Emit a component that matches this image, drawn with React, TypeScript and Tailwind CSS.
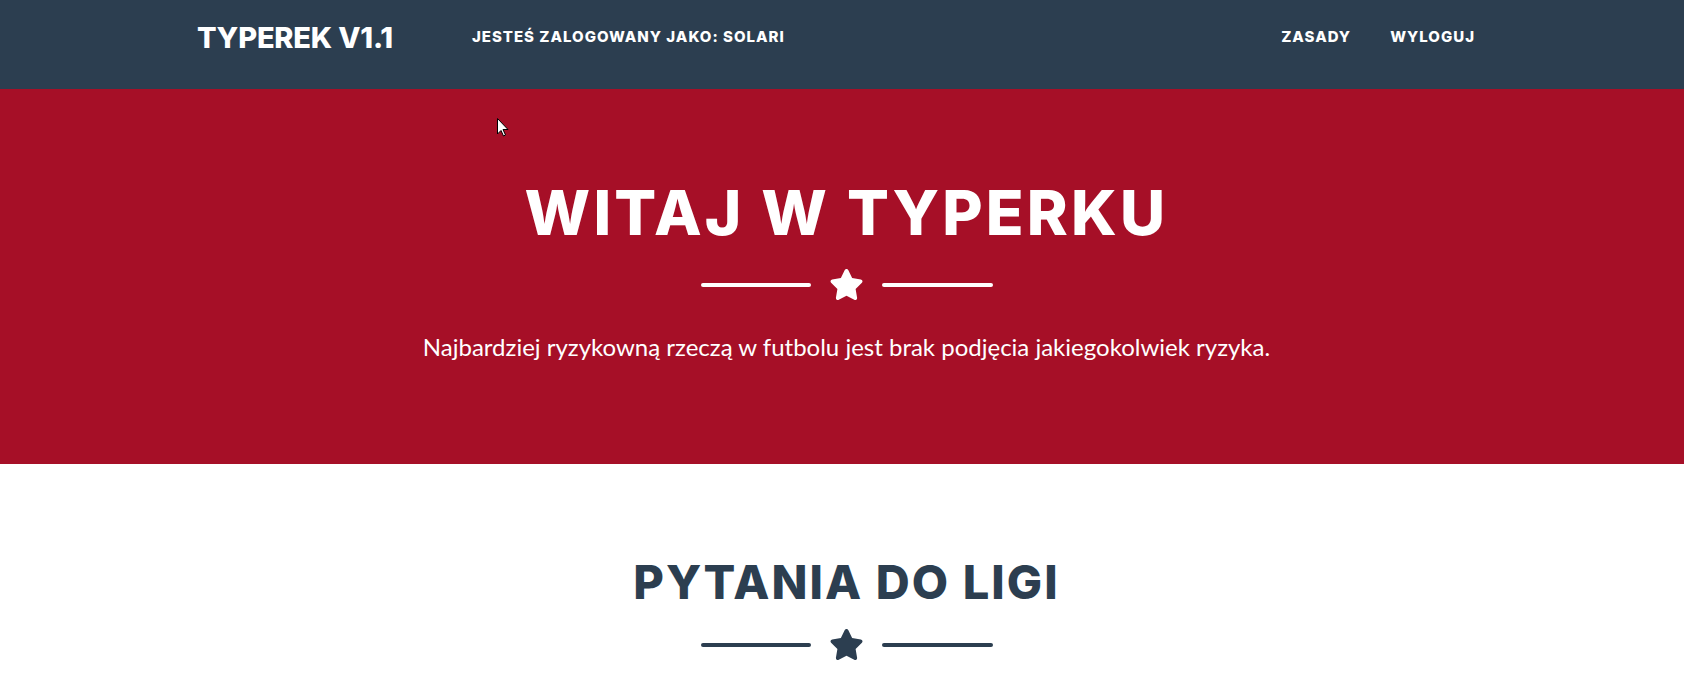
import React from "react";

const Star = ({ className }: { className: string }) => (
  <svg viewBox="0 0 576 512" className={className} fill="currentColor">
    <path d="M316.9 18C311.6 7 300.4 0 288.1 0s-23.4 7-28.8 18L195 150.3 51.4 171.5c-12 1.8-22 10.2-25.7 21.7s-.7 24.2 7.9 32.7L137.8 329 113.2 474.7c-2 12 3 24.2 12.9 31.3s23 8 33.8 2.3l128.3-68.5 128.3 68.5c10.8 5.7 23.9 4.9 33.8-2.3s14.9-19.3 12.9-31.3L438.5 329 542.7 225.9c8.6-8.5 11.7-21.2 7.9-32.7s-13.7-19.9-25.7-21.7L381.2 150.3 316.9 18z" />
  </svg>
);

const Divider = ({ light }: { light?: boolean }) => {
  const line = light ? "bg-white" : "bg-[#2c3e50]";
  return (
    <div className={`flex items-center ${light ? "text-white" : "text-[#2c3e50]"}`}>
      <div className={`w-[110px] h-[4px] rounded-full ${line}`} />
      <Star className="w-[35px] h-[31px] mx-[18px]" />
      <div className={`w-[111px] h-[4px] rounded-full ${line}`} />
    </div>
  );
};

export default function App() {
  const heading = { fontFamily: "Inter, 'DejaVu Sans', sans-serif" };

  return (
    <div className="min-h-screen bg-white relative">
      <nav className="h-[89px] bg-[#2c3e50] text-white" style={heading}>
        <div className="w-[1320px] mx-auto px-3 flex items-start">
          <a className="mt-[20px] ml-[3px] text-[29px] leading-[36px] font-extrabold tracking-[-0.2px]">TYPEREK V1.1</a>
          <span className="mt-[28px] ml-[79px] text-[15px] leading-[18px] font-extrabold tracking-[1px]">JESTEŚ ZALOGOWANY JAKO: SOLARI</span>
          <div className="ml-auto mr-[15px] mt-[28px] flex gap-[39px] text-[15px] leading-[18px] font-extrabold tracking-[1px]">
            <a>ZASADY</a>
            <a>WYLOGUJ</a>
          </div>
        </div>
      </nav>

      <header className="bg-[#a60f27] h-[375px] text-white flex flex-col items-center pl-[9px]">
        <h1 className="mt-[93px] text-[62px] leading-[62px] font-extrabold tracking-[3.2px]" style={heading}>WITAJ W TYPERKU</h1>
        <div className="mt-[25px]">
          <Divider light />
        </div>
        <p className="mt-[32px] text-[24px] leading-[30px]" style={{ fontFamily: "Lato, sans-serif" }}>
          Najbardziej ryzykowną rzeczą w futbolu jest brak podjęcia jakiegokolwiek ryzyka.
        </p>
      </header>

      <section className="flex flex-col items-center text-[#2c3e50] pl-[9px]">
        <h2 className="mt-[94px] text-[47px] leading-[48px] font-extrabold tracking-[2.1px]" style={heading}>PYTANIA DO LIGI</h2>
        <div className="mt-[23px]">
          <Divider />
        </div>
      </section>

      <svg className="absolute left-[497px] top-[118px] w-[12px] h-[19px]" viewBox="0 0 12 19">
        <path d="M0.5 0.5 L0.5 16 L4 12.5 L6.5 18 L8.5 17 L6 11.5 L11 11.5 Z" fill="white" stroke="black" strokeWidth="1" />
      </svg>
    </div>
  );
}
